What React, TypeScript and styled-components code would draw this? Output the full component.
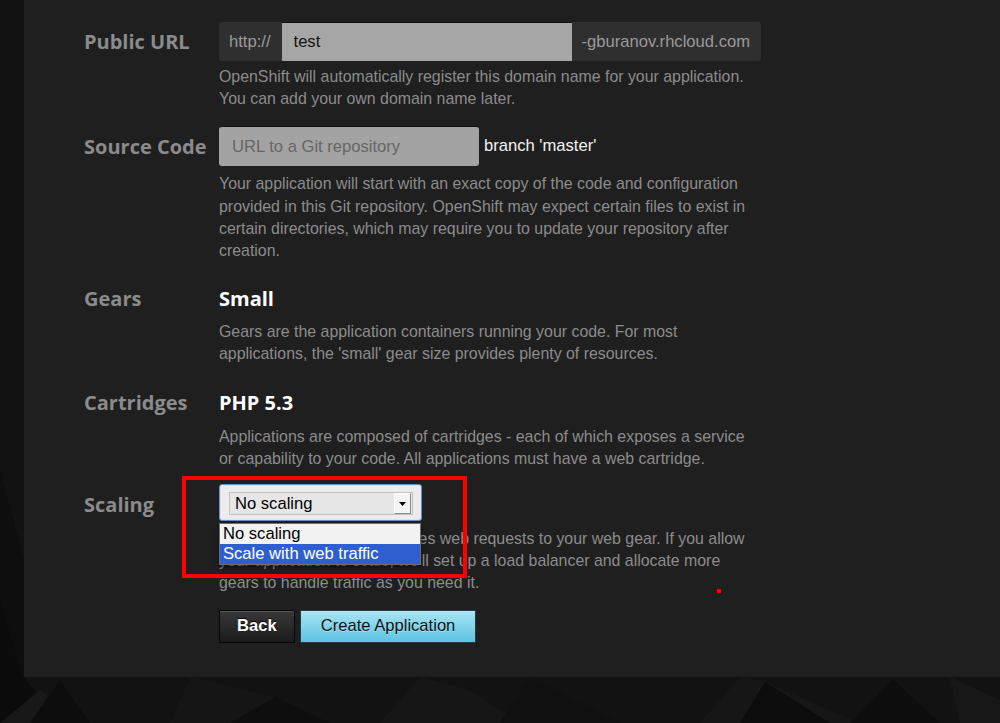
import React from "react";
import styled, { createGlobalStyle } from "styled-components";

const GlobalStyle = createGlobalStyle`
  html, body {
    margin: 0;
    padding: 0;
    background: #121212;
  }
  body {
    font-family: "Liberation Sans", Arial, sans-serif;
  }
`;

const Page = styled.div`
  position: relative;
  width: 1000px;
  height: 723px;
  overflow: hidden;
  background: #121212;
`;

const Backdrop = styled.svg`
  position: absolute;
  inset: 0;
  z-index: 0;
`;

const Panel = styled.main`
  position: relative;
  z-index: 1;
  box-sizing: border-box;
  margin-left: 24px;
  width: 976px;
  height: 677px;
  padding: 22px 0 0 60px;
  background: #1f1f1f;
`;

const Field = styled.section<{ $top: number }>`
  display: grid;
  grid-template-columns: 135px 545px;
  margin-top: ${(p) => p.$top}px;
`;

const Label = styled.div<{ $h: number }>`
  font-family: "Open Sans", sans-serif;
  font-weight: 700;
  font-size: 20px;
  line-height: ${(p) => p.$h}px;
  color: #8b8b8b;
  white-space: nowrap;
`;

const Value = styled.div`
  font-family: "Open Sans", sans-serif;
  font-weight: 700;
  font-size: 20px;
  line-height: 30px;
  color: #ffffff;
`;

const Help = styled.p<{ $top?: number }>`
  margin: ${(p) => p.$top ?? 7}px 0 0;
  max-width: 538px;
  font-size: 15.9px;
  line-height: 22.2px;
  color: #8c8c8c;
`;

const InputGroup = styled.div`
  display: flex;
  width: 542px;
  height: 39px;
  border-radius: 3px;
  overflow: hidden;
`;

const Addon = styled.span`
  display: flex;
  align-items: center;
  padding: 0 11px 0 10px;
  background: #2f2f2f;
  color: #9a9a9a;
  font-size: 16.6px;
`;

const TextInput = styled.input`
  flex: 1;
  min-width: 0;
  box-sizing: border-box;
  border: 0;
  border-top: 1px solid #111;
  padding: 0 12px;
  background: #a6a6a6;
  color: #151515;
  font-family: "Liberation Sans", Arial, sans-serif;
  font-size: 16.6px;
  outline: none;
`;

const SourceRow = styled.div`
  display: flex;
  align-items: flex-start;
  gap: 5px;
`;

const SourceInput = styled(TextInput)`
  flex: none;
  width: 260px;
  height: 40px;
  border-radius: 3px;
  padding-left: 13px;
  background: #a3a3a3;
  &::placeholder {
    color: #666;
  }
`;

const Branch = styled.span`
  color: #f2f2f2;
  font-size: 16.6px;
  line-height: 40px;
`;

const SelectWrap = styled.div`
  position: relative;
  width: 203px;
`;

const SelectBox = styled.div`
  box-sizing: border-box;
  height: 37px;
  padding: 7px 8px 0 9px;
  background: #ececec;
  border: 1px solid #6b8fc6;
  border-radius: 3px;
  box-shadow: inset 0 0 0 1px #d9e3f2;
`;

const SelectField = styled.div`
  display: flex;
  align-items: center;
  justify-content: space-between;
  box-sizing: border-box;
  height: 23px;
  padding-left: 5px;
  background: #e6e6e6;
  border: 1px solid #c2c2c2;
  font-size: 16.6px;
  color: #000;
`;

const ArrowButton = styled.span`
  display: flex;
  align-items: center;
  justify-content: center;
  box-sizing: border-box;
  width: 17px;
  height: 21px;
  margin-right: 1px;
  background: #f4f4f4;
  border: 1px solid #fff;
  border-right-color: #8a8a8a;
  border-bottom-color: #8a8a8a;
`;

const OptionList = styled.ul`
  position: absolute;
  left: 0;
  top: 39px;
  z-index: 2;
  box-sizing: border-box;
  width: 202px;
  margin: 0;
  padding: 0;
  list-style: none;
  background: #f2f2f2;
  border: 1px solid #6e6e6e;
  box-shadow: 0 2px 4px rgba(0, 0, 0, 0.5);
`;

const Option = styled.li<{ $active?: boolean }>`
  height: 20px;
  padding-left: 3px;
  font-size: 16.6px;
  line-height: 20px;
  color: ${(p) => (p.$active ? "#fff" : "#000")};
  background: ${(p) => (p.$active ? "#2f5fcf" : "transparent")};
`;

const Actions = styled.div`
  display: flex;
  gap: 5px;
  margin: 15px 0 0 135px;
`;

const Button = styled.button<{ $primary?: boolean }>`
  box-sizing: border-box;
  height: 33px;
  padding: 0 ${(p) => (p.$primary ? 20 : 17)}px;
  border: 1px solid ${(p) => (p.$primary ? "#2a3a40" : "#050505")};
  font-family: "Liberation Sans", Arial, sans-serif;
  font-size: 16.6px;
  font-weight: ${(p) => (p.$primary ? 400 : 700)};
  color: ${(p) => (p.$primary ? "#111" : "#fff")};
  background: ${(p) =>
    p.$primary
      ? "linear-gradient(#a8e4f3, #5cc3e2)"
      : "linear-gradient(#383838, #1b1b1b)"};
  text-shadow: ${(p) =>
    p.$primary ? "0 1px 0 rgba(255,255,255,0.4)" : "0 -1px 0 #000"};
  box-shadow: inset 0 1px 0 rgba(255, 255, 255, 0.15);
  cursor: pointer;
`;

const Highlight = styled.div`
  position: absolute;
  z-index: 3;
  left: 182px;
  top: 476px;
  width: 285px;
  height: 102px;
  box-sizing: border-box;
  border: 4px solid #ff0000;
  pointer-events: none;
`;

const Dot = styled.div`
  position: absolute;
  z-index: 3;
  left: 717px;
  top: 589px;
  width: 4px;
  height: 4px;
  background: #ff0000;
`;

const Shards = () => (
  <Backdrop width="1000" height="723" viewBox="0 0 1000 723">
    <polygon points="0,470 24,560 24,723 0,723" fill="#0e0e0e" />
    <polygon points="0,600 22,675 60,723 0,723" fill="#0b0b0b" />
    <polygon points="40,690 80,723 0,723" fill="#181818" />
    <polygon points="60,680 90,723 30,723" fill="#0d0d0d" />
    <polygon points="190,677 275,697 320,723 170,723" fill="#151515" />
    <polygon points="275,697 330,723 230,723" fill="#0e0e0e" />
    <polygon points="420,677 470,690 520,723 380,723" fill="#161616" />
    <polygon points="530,677 620,723 500,723" fill="#101010" />
    <polygon points="740,677 765,682 860,723 700,723" fill="#161616" />
    <polygon points="765,682 830,723 740,723" fill="#0c0c0c" />
    <polygon points="893,679 940,723 850,723" fill="#0d0d0d" />
    <polygon points="950,677 1000,700 1000,723 960,723" fill="#171717" />
  </Backdrop>
);

export default function App() {
  return (
    <Page>
      <GlobalStyle />
      <Shards />
      <Panel>
        <Field $top={0}>
          <Label $h={39}>Public URL</Label>
          <div>
            <InputGroup>
              <Addon>http://</Addon>
              <TextInput defaultValue="test" />
              <Addon>-gburanov.rhcloud.com</Addon>
            </InputGroup>
            <Help $top={5}>
              OpenShift will automatically register this domain name for your
              application. You can add your own domain name later.
            </Help>
          </div>
        </Field>

        <Field $top={16}>
          <Label $h={42}>Source Code</Label>
          <div>
            <SourceRow>
              <SourceInput placeholder="URL to a Git repository" />
              <Branch>branch 'master'</Branch>
            </SourceRow>
            <Help>
              Your application will start with an exact copy of the code and
              configuration provided in this Git repository. OpenShift may
              expect certain files to exist in certain directories, which may
              require you to update your repository after creation.
            </Help>
          </div>
        </Field>

        <Field $top={22}>
          <Label $h={30}>Gears</Label>
          <div>
            <Value>Small</Value>
            <Help $top={7}>
              Gears are the application containers running your code. For most
              applications, the 'small' gear size provides plenty of resources.
            </Help>
          </div>
        </Field>

        <Field $top={22}>
          <Label $h={30}>Cartridges</Label>
          <div>
            <Value>PHP 5.3</Value>
            <Help $top={8}>
              Applications are composed of cartridges - each of which exposes a
              service or capability to your code. All applications must have a
              web cartridge.
            </Help>
          </div>
        </Field>

        <Field $top={14}>
          <Label $h={42}>Scaling</Label>
          <div>
            <SelectWrap>
              <SelectBox>
                <SelectField>
                  No scaling
                  <ArrowButton>
                    <svg width="7" height="4" viewBox="0 0 7 4">
                      <polygon points="0,0 7,0 3.5,4" fill="#000" />
                    </svg>
                  </ArrowButton>
                </SelectField>
              </SelectBox>
              <OptionList>
                <Option>No scaling</Option>
                <Option $active>Scale with web traffic</Option>
              </OptionList>
            </SelectWrap>
            <Help>
              OpenShift automatically routes web requests to your web gear. If
              you allow your application to scale, we'll set up a load balancer
              and allocate more gears to handle traffic as you need it.
            </Help>
          </div>
        </Field>

        <Actions>
          <Button>Back</Button>
          <Button $primary>Create Application</Button>
        </Actions>
      </Panel>
      <Highlight />
      <Dot />
    </Page>
  );
}
